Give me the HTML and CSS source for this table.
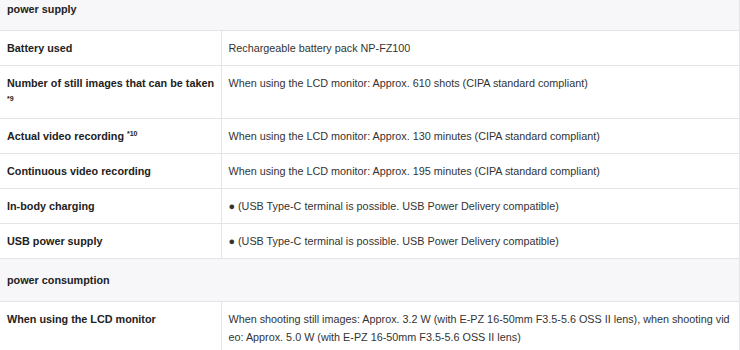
FILE: index.html
```html
<!doctype html>
<html lang="en">

<head>
    <meta charset="UTF-8" />
    <title>Specifications</title>
    <link rel="stylesheet" href="styles.css">
</head>

<body>
    <table class="spec">
        <tbody>
            <tr class="spec__section">
                <th colspan="2">power supply</th>
            </tr>
            <tr>
                <th>Battery used</th>
                <td>Rechargeable battery pack NP-FZ100</td>
            </tr>
            <tr>
                <th>Number of still images that can be taken <br><sup>*9</sup></th>
                <td>When using the LCD monitor: Approx. 610 shots (CIPA standard compliant)</td>
            </tr>
            <tr>
                <th>Actual video recording <sup>*10</sup></th>
                <td>When using the LCD monitor: Approx. 130 minutes (CIPA standard compliant)</td>
            </tr>
            <tr>
                <th>Continuous video recording</th>
                <td>When using the LCD monitor: Approx. 195 minutes (CIPA standard compliant)</td>
            </tr>
            <tr>
                <th>In-body charging</th>
                <td>● (USB Type-C terminal is possible. USB Power Delivery compatible)</td>
            </tr>
            <tr>
                <th>USB power supply</th>
                <td>● (USB Type-C terminal is possible. USB Power Delivery compatible)</td>
            </tr>
            <tr class="spec__section">
                <th colspan="2">power consumption</th>
            </tr>
            <tr>
                <th>When using the LCD monitor</th>
                <td>When shooting still images: Approx. 3.2 W (with E-PZ 16-50mm F3.5-5.6 OSS II lens), when shooting video: Approx. 5.0 W (with E-PZ 16-50mm F3.5-5.6 OSS II lens)</td>
            </tr>
        </tbody>
    </table>
</body>

</html>
```

FILE: styles.css
```css
* {
    margin: 0;
    padding: 0;
    box-sizing: border-box;
}

body {
    font-family: 'Liberation Sans', Arial, sans-serif;
    font-size: 10.8px;
    color: #333;
    background: white;
}

.spec {
    width: 740px;
    margin-top: -13px;
    border-collapse: collapse;
    border-right: 1px solid #e4e4e6;
    line-height: 18px;
}

.spec th,
.spec td {
    padding: 8px 7px;
    border-top: 1px solid #e4e4e6;
    text-align: left;
    vertical-align: top;
}

.spec th {
    width: 221px;
    padding-right: 2px;
    font-weight: bold;
    color: #222;
    border-right: 1px solid #e4e4e6;
    white-space: nowrap;
}

.spec td {
    word-break: break-all;
}

.spec sup {
    font-size: 7px;
    line-height: 0;
    vertical-align: 4px;
}

.spec__section th {
    padding: 12px 7px;
    background: #f7f7f9;
    border-right: 0;
}
```
